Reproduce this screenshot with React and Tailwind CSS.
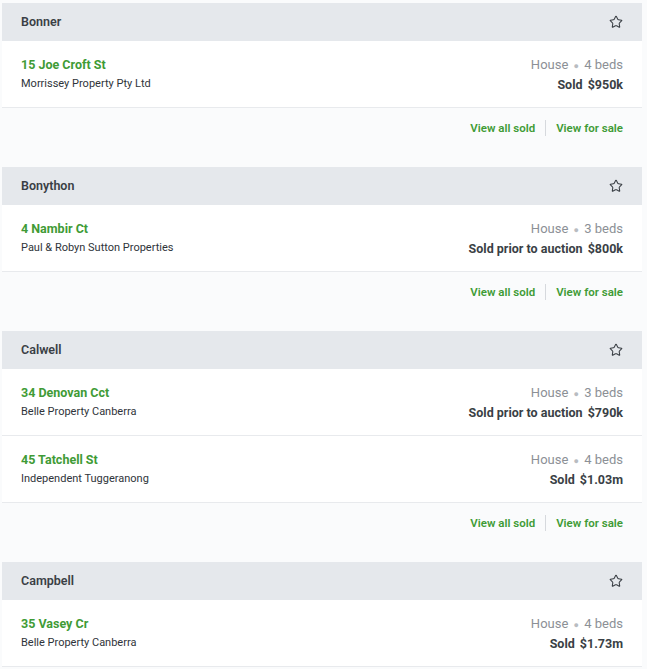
import React from 'react';
import { Star } from 'lucide-react';

const suburbs = [
  {
    name: 'Bonner',
    sales: [
      { address: '15 Joe Croft St', agency: 'Morrissey Property Pty Ltd', beds: 4, result: 'Sold', price: '$950k' },
    ],
  },
  {
    name: 'Bonython',
    sales: [
      { address: '4 Nambir Ct', agency: 'Paul & Robyn Sutton Properties', beds: 3, result: 'Sold prior to auction', price: '$800k' },
    ],
  },
  {
    name: 'Calwell',
    sales: [
      { address: '34 Denovan Cct', agency: 'Belle Property Canberra', beds: 3, result: 'Sold prior to auction', price: '$790k' },
      { address: '45 Tatchell St', agency: 'Independent Tuggeranong', beds: 4, result: 'Sold', price: '$1.03m' },
    ],
  },
  {
    name: 'Campbell',
    sales: [
      { address: '35 Vasey Cr', agency: 'Belle Property Canberra', beds: 4, result: 'Sold', price: '$1.73m' },
    ],
  },
];

function SaleRow({ sale }) {
  return (
    <div className="flex h-[67px] items-start justify-between border-b border-[#e8eaed] bg-white px-[19px] pt-[15px]">
      <div className="flex flex-col">
        <a className="text-[12.5px] font-bold leading-[18px] text-[#3f9b36]">{sale.address}</a>
        <span className="mt-[1px] text-[11px] leading-[18px] text-[#2f343a]">{sale.agency}</span>
      </div>
      <div className="flex flex-col items-end">
        <span className="text-[13px] leading-[18px] text-[#8c9096]">
          House <span className="mx-[2px] text-[9px] text-[#b8bcc1]">●</span> {sale.beds} beds
        </span>
        <span className="mt-[1px] text-[12.5px] font-bold leading-[18px] text-[#3a3f45]">
          {sale.result} <span className="ml-[2px]">{sale.price}</span>
        </span>
      </div>
    </div>
  );
}

function SuburbSection({ suburb }) {
  return (
    <div className="mb-[2px]">
      <div className="flex h-[38px] items-center justify-between bg-[#e5e8ec] px-[19px]">
        <span className="text-[12.5px] font-semibold text-[#3a3f45]">{suburb.name}</span>
        <Star className="h-[14px] w-[14px] text-[#3a3f45]" strokeWidth={1.8} />
      </div>
      {suburb.sales.map((sale) => (
        <SaleRow key={sale.address} sale={sale} />
      ))}
      <div className="flex h-[57px] items-start justify-end bg-[#fafbfc] px-[19px] pt-[12px]">
        <a className="text-[11.5px] font-semibold leading-[16px] text-[#3f9b36]">View all sold</a>
        <span className="mx-[10px] h-[16px] w-px bg-[#d6d9dd]" />
        <a className="text-[11.5px] font-semibold leading-[16px] text-[#3f9b36]">View for sale</a>
      </div>
    </div>
  );
}

export default function App() {
  return (
    <div className="min-h-screen bg-[#fafbfc] font-[Roboto,sans-serif] pl-[2px] pt-[3px]">
      <div className="w-[640px]">
        {suburbs.map((s) => (
          <SuburbSection key={s.name} suburb={s} />
        ))}
      </div>
    </div>
  );
}
